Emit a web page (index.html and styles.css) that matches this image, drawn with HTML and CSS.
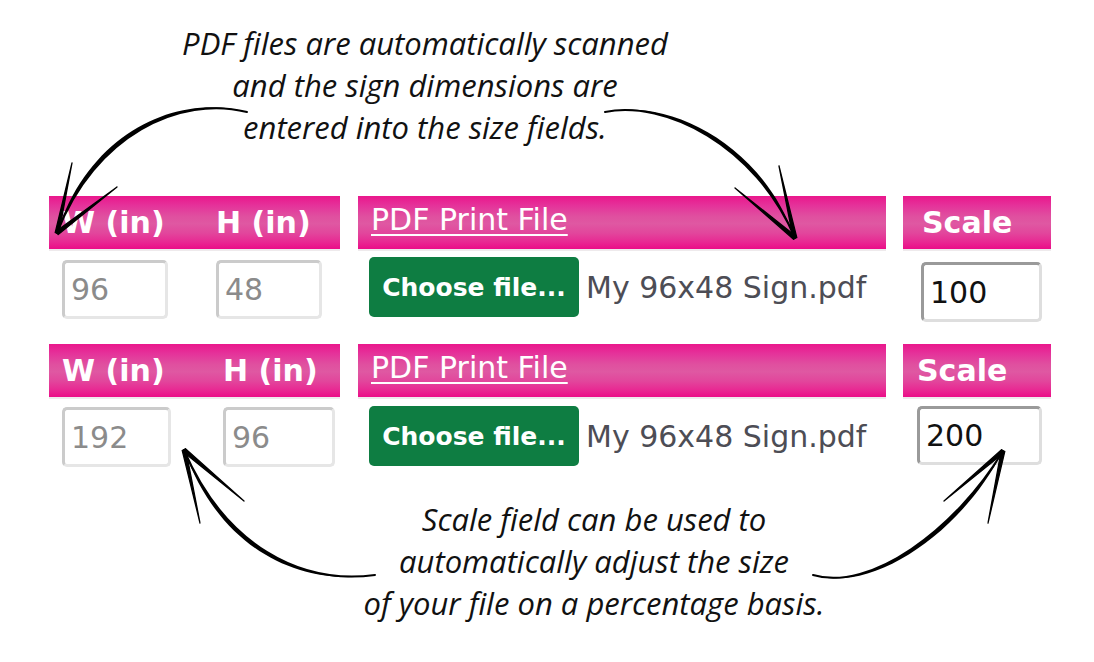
FILE: index.html
```html
<!DOCTYPE html>
<html lang="en">
<head>
<meta charset="utf-8">
<title>Sign upload</title>
<link rel="stylesheet" href="styles.css">
</head>
<body>
<div class="page">
  <p class="note note--top">PDF files are automatically scanned<br>and the sign dimensions are<br>entered into the size fields.</p>

  <div class="form">
    <div class="row row--first">
      <div class="group group--dims">
        <div class="bar bar--dims"><span class="label label--w">W (in)</span><span class="label">H (in)</span></div>
        <div class="fields fields--dims">
          <input class="num num--w" type="text" value="96" disabled>
          <input class="num num--h" type="text" value="48" disabled>
        </div>
      </div>
      <div class="group group--file">
        <div class="bar bar--file"><a class="file-link" href="#">PDF Print File</a></div>
        <div class="picker">
          <button class="pick" type="button">Choose file...</button>
          <span class="fname">My 96x48 Sign.pdf</span>
        </div>
      </div>
      <div class="group group--scale">
        <div class="bar bar--scale"><span class="label">Scale</span></div>
        <div class="fields fields--scale">
          <input class="num num--scale" type="text" value="100">
        </div>
      </div>
    </div>

    <div class="row row--second">
      <div class="group group--dims">
        <div class="bar bar--dims"><span class="label label--w">W (in)</span><span class="label">H (in)</span></div>
        <div class="fields fields--dims">
          <input class="num num--w" type="text" value="192" disabled>
          <input class="num num--h" type="text" value="96" disabled>
        </div>
      </div>
      <div class="group group--file">
        <div class="bar bar--file"><a class="file-link" href="#">PDF Print File</a></div>
        <div class="picker">
          <button class="pick" type="button">Choose file...</button>
          <span class="fname">My 96x48 Sign.pdf</span>
        </div>
      </div>
      <div class="group group--scale">
        <div class="bar bar--scale"><span class="label">Scale</span></div>
        <div class="fields fields--scale">
          <input class="num num--scale" type="text" value="200">
        </div>
      </div>
    </div>
  </div>

  <p class="note note--bottom">Scale field can be used to<br>automatically adjust the size<br>of your file on a percentage basis.</p>

  <!-- hand-drawn callout arrows -->
  <svg class="arrows" width="1094" height="662" viewBox="0 0 1094 662" aria-hidden="true">
    <g class="ink">
      <!-- top left: caption to W/H fields -->
      <path class="curve" d="M247,112 C180,95 95,135 57,233"/>
      <path class="fillcurve" d="M247,112 C180,95 95,135 57,233 C89.8,130.3 179.5,93 247,112 Z"/>
      <path class="barb" d="M55.2,232.6 L72,163 L58.8,233.4 Z"/>
      <path class="barb" d="M55.8,231.5 L117,187 L58.2,234.5 Z"/>

      <!-- top right: caption to file header -->
      <path class="curve" d="M605,112 C665,100 755,145 795,238"/>
      <path class="fillcurve" d="M605,112 C665,100 755,145 795,238 C760,140 665,98 605,112 Z"/>
      <path class="barb" d="M793.2,238.4 L779,166 L796.8,237.6 Z"/>
      <path class="barb" d="M793.8,239.4 L735,188 L796.2,236.6 Z"/>

      <!-- bottom left: caption to W field -->
      <path class="curve" d="M375,575 C300,585 225,545 184,450"/>
      <path class="fillcurve" d="M375,575 C300,585 225,545 184,450 C219.7,549.6 300,587 375,575 Z"/>
      <path class="barb" d="M182.2,450.4 L200,523 L185.8,449.6 Z"/>
      <path class="barb" d="M182.8,451.4 L244,501 L185.2,448.6 Z"/>

      <!-- bottom right: caption to scale field -->
      <path class="curve" d="M813,575 C870,592 955,530 1003,451"/>
      <path class="fillcurve" d="M813,575 C870,592 955,530 1003,451 C960,535 870,594 813,575 Z"/>
      <path class="barb" d="M1001.2,450.6 L988,523 L1004.8,451.4 Z"/>
      <path class="barb" d="M1001.8,449.6 L944,501 L1004.2,452.4 Z"/>
    </g>
  </svg>
</div>
</body>
</html>
```

FILE: styles.css
```css
* {
  box-sizing: border-box;
}

html,
body {
  margin: 0;
  background: #ffffff;
}

.page {
  position: relative;
  width: 1094px;
  height: 662px;
  overflow: hidden;
}

/* italic explanatory captions */
.note {
  margin: 0;
  font-family: "Open Sans", Lato, sans-serif;
  font-style: italic;
  font-size: 31px;
  line-height: 42px;
  color: #111111;
  text-align: center;
}

.note--top {
  width: 850px;
  padding-top: 22px;
}

.note--bottom {
  width: 700px;
  margin-left: 244px;
  margin-top: 28px;
}

/* form rows */
.form {
  margin-top: 48px;
  padding-left: 49px;
  display: flex;
  flex-direction: column;
  gap: 22px;
}

.row {
  display: flex;
  align-items: flex-start;
  height: 126px;
}

.group {
  display: flex;
  flex-direction: column;
}

.group--dims {
  width: 291px;
}

.group--file {
  width: 528px;
  margin-left: 18px;
}

.group--scale {
  width: 148px;
  margin-left: 17px;
}

/* magenta column headers */
.bar {
  height: 55px;
  display: flex;
  align-items: center;
  border-bottom: 2px solid #eeeaec;
  background: linear-gradient(to bottom,
      #ea178c 0%,
      #e5329a 18%,
      #e04f9f 38%,
      #df58a2 52%,
      #e2469c 70%,
      #e82a93 86%,
      #eb0d88 100%);
  color: #ffffff;
  font-family: "DejaVu Sans", Verdana, sans-serif;
  font-size: 30px;
  white-space: nowrap;
}

.label {
  font-weight: bold;
}

.bar--dims {
  padding-left: 13px;
}

.label--w {
  width: 154px;
}

.row--second .label--w {
  width: 161px;
}

.bar--file {
  padding-left: 13px;
  padding-bottom: 6px;
}

.file-link {
  color: #ffffff;
  text-decoration: underline;
  text-decoration-thickness: 2px;
  text-underline-offset: 4px;
}

.bar--scale {
  padding-left: 19px;
}

.row--second .bar--scale {
  padding-left: 14px;
}

/* inputs */
.fields {
  display: flex;
}

.fields--dims {
  padding-left: 13px;
  gap: 48px;
  margin-top: 9px;
}

.row--second .fields--dims {
  gap: 52px;
  margin-top: 8px;
}

.num {
  height: 59px;
  padding: 0 0 0 6px;
  border: 3px solid;
  border-color: #cbcbcb #e6e6e6 #e6e6e6 #cbcbcb;
  border-radius: 5px;
  background: #ffffff;
  font-family: "DejaVu Sans", Verdana, sans-serif;
  font-size: 30px;
  color: #111111;
  outline: none;
}

.num:disabled {
  color: #8b8b8b;
  -webkit-text-fill-color: #8b8b8b;
  background: #ffffff;
}

.num--w,
.num--h {
  width: 106px;
}

.row--second .num {
  height: 60px;
}

.row--second .num--w {
  width: 109px;
}

.row--second .num--h {
  width: 112px;
}

.fields--scale {
  padding-left: 18px;
  margin-top: 11px;
}

.row--second .fields--scale {
  padding-left: 14px;
  margin-top: 7px;
}

.num--scale {
  width: 121px;
  height: 60px;
  padding-left: 6px;
  border-color: #9a9a9a #dedede #dedede #9a9a9a;
}

.row--second .num--scale {
  width: 125px;
  height: 59px;
}

/* file picker */
.picker {
  display: flex;
  align-items: center;
  gap: 7px;
  padding-left: 11px;
  margin-top: 6px;
}

.row--second .picker {
  margin-top: 7px;
}

.pick {
  width: 210px;
  height: 60px;
  padding: 0;
  border: none;
  border-radius: 5px;
  background: #0e7d42;
  color: #ffffff;
  font-family: "DejaVu Sans", Verdana, sans-serif;
  font-size: 25px;
  font-weight: bold;
}

.fname {
  font-family: "DejaVu Sans", Verdana, sans-serif;
  font-size: 30px;
  color: #4d4d55;
  white-space: nowrap;
}

/* callout arrows layer */
.arrows {
  position: absolute;
  left: 0;
  top: 0;
  pointer-events: none;
}

.curve {
  fill: none;
  stroke: #000000;
  stroke-width: 2;
  stroke-linecap: round;
}

.fillcurve {
  fill: #000000;
}

.barb {
  fill: #000000;
  stroke: #000000;
  stroke-width: 1.3;
  stroke-linejoin: round;
}
```
